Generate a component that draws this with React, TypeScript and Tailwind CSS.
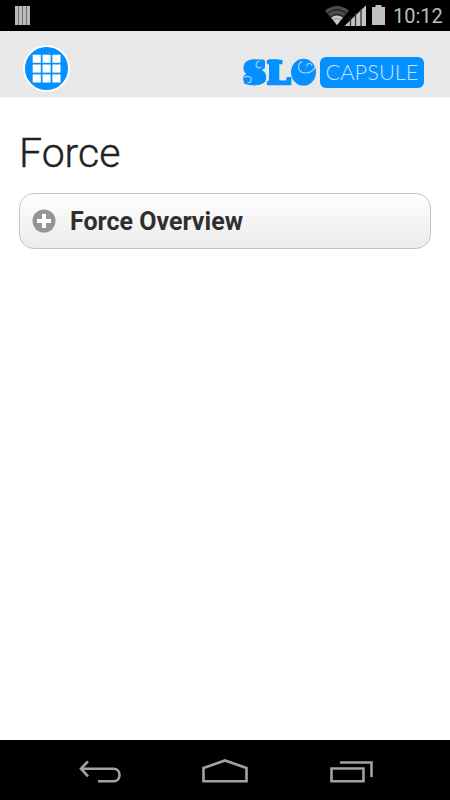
function StatusBar() {
  return (
    <div className="flex h-[31px] items-center justify-between bg-black pl-[15px] pr-[8px]">
      <div className="flex h-[19px] w-[15px] gap-px bg-[#707070]">
        <span className="flex-1 bg-[#bababa]" />
        <span className="flex-1 bg-[#bababa]" />
        <span className="flex-1 bg-[#bababa]" />
        <span className="flex-1 bg-[#bababa]" />
      </div>
      <div className="flex items-center">
        <svg width="62" height="31" viewBox="0 0 62 31">
          <path d="M1 10.5Q13 1.5 25 10.5L13 25Z" fill="#4b4b4b" />
          <path d="M3.8 13Q13 6.5 22.2 13M6.8 16.7Q13 12.5 19.2 16.7" fill="none" stroke="#111" strokeWidth="1" />
          <path d="M7.2 17.7Q13 13.2 18.8 17.7L13 25Z" fill="#c8c8c8" />
          <path d="M9 19.7Q13 17.2 17 19.7" fill="none" stroke="#777" strokeWidth=".7" />
          <path d="M20.5 26L42 5.2V26Z" fill="#c4c4c4" />
          <path d="M26.5 18V26M31.5 13V26M37 9V26" stroke="#333" strokeWidth="1.3" />
          <path d="M48 7h3.5V5h6v2H61v18H48Z" fill="#c0c0c0" />
        </svg>
        <span className="ml-[7px] w-[49px] whitespace-nowrap text-[20px] leading-[30px] text-[#bebebe]">10:12</span>
      </div>
    </div>
  );
}

function MenuButton() {
  return (
    <button aria-label="Menu" className="grid h-[47px] w-[47px] place-items-center rounded-full border-2 border-white bg-[#0590ff]">
      <svg width="29" height="29" viewBox="0 0 29 29" fill="white">
        {[0.7, 10.5, 20.4].map((y) =>
          [0.7, 10.5, 20.4].map((x) => <rect key={`${x}-${y}`} x={x} y={y} width="8.1" height="8.1" />),
        )}
      </svg>
    </button>
  );
}

function Logo() {
  return (
    <div className="mt-[8px] flex items-center">
      <svg width="79" height="48" viewBox="0 0 79 48" className="overflow-visible">
        <g
          fill="#0590ff"
          stroke="#0590ff"
          strokeWidth="2.6"
          strokeLinejoin="round"
          fontFamily="DejaVu Serif"
          fontWeight="700"
          fontSize="32"
        >
          <text x="1.6" y="35.8" textLength="24" lengthAdjust="spacingAndGlyphs">S</text>
          <text x="25.6" y="35.8" textLength="24" lengthAdjust="spacingAndGlyphs">L</text>
          <text x="52" y="33" fontSize="24" textLength="20" lengthAdjust="spacingAndGlyphs">C</text>
        </g>
        {/* solid bowls and stems behind the curls */}
        <g fill="#0590ff">
          <ellipse cx="13" cy="18.2" rx="10" ry="7" />
          <rect x="14" y="11.5" width="10" height="9.5" rx="2" />
          <ellipse cx="13.5" cy="30.5" rx="11.5" ry="6.7" />
          <rect x="28" y="11.3" width="9.5" height="25" />
          <ellipse cx="62.5" cy="24.2" rx="12.5" ry="13.4" />
        </g>
        <g fill="none" stroke="#a9d6fb" strokeWidth="1.1" strokeLinecap="round">
          <path d="M18 13c-3 1-4 4.6-1.6 6.2 1.3.9 2.8.8 3.6.4" />
          <path d="M3.2 29.4c3-2.4 7.4-.8 7 2.6-.2 1.8-1.6 2.8-3.2 2.7" />
          <path d="M61 13.5c-5.6 3-3.8 11 2.2 11.4 5.8.4 10-2.2 10.6-6" />
          <path d="M71 17.2c-1.2-2.6-5.2-2.2-5 .7" />
        </g>
      </svg>
      <div className="flex h-[31px] w-[104px] items-center justify-center rounded-[6px] bg-[#0590ff]">
        <svg width="95" height="30" viewBox="0 0 95 30" className="overflow-visible">
          <text x="0.5" y="22.7" textLength="93" fontFamily="Lato" fontWeight="300" fontSize="21.5" lengthAdjust="spacingAndGlyphs" fill="#c4e3ff">
            CAPSULE
          </text>
        </svg>
      </div>
    </div>
  );
}

function NavBar() {
  return (
    <nav className="h-[60px] bg-black">
      <svg width="450" height="60" viewBox="0 0 450 60" fill="none" stroke="#a2a2a2" strokeWidth="2.6">
        <path d="M81 28.7H113.5C121.5 28.7 121.5 41.3 113.5 41.3H98M88 21.3L81 28.7L88 36.3" />
        <path d="M203.5 41.3V28L225 20.5L246.5 28V41.3Z" />
        <path d="M331.5 28.5H363.5V41.3H331.5ZM340 22.5H371.5V37" />
      </svg>
    </nav>
  );
}

export default function App() {
  return (
    <div className="flex h-[800px] w-[450px] flex-col bg-white font-['Roboto',sans-serif]">
      <StatusBar />
      <header className="flex h-[67px] items-center justify-between border-b border-[#f3f3f3] bg-[#e8e8e8] pl-[23px] pr-[26px] pt-[8px]">
        <MenuButton />
        <Logo />
      </header>
      <main className="flex-1 px-[19px] pt-[31px]">
        <h1 className="text-[41px] font-light leading-[48px] text-[#222] [-webkit-text-stroke:0.4px_#222]">Force</h1>
        <button className="mt-[16px] flex h-[56px] w-full items-center rounded-[15px] border border-[#c4c4c4] bg-linear-to-b from-white to-[#ebebeb] pl-[12px]">
          <svg width="24" height="24" viewBox="0 0 24 24">
            <circle cx="12" cy="12" r="11.5" fill="#959595" />
            <path d="M12 5V19M5 12H19" stroke="white" strokeWidth="4" />
          </svg>
          <span className="ml-[14px] pt-[2px] text-[25px] font-bold text-[#2f2f2f]">Force Overview</span>
        </button>
      </main>
      <NavBar />
    </div>
  );
}
